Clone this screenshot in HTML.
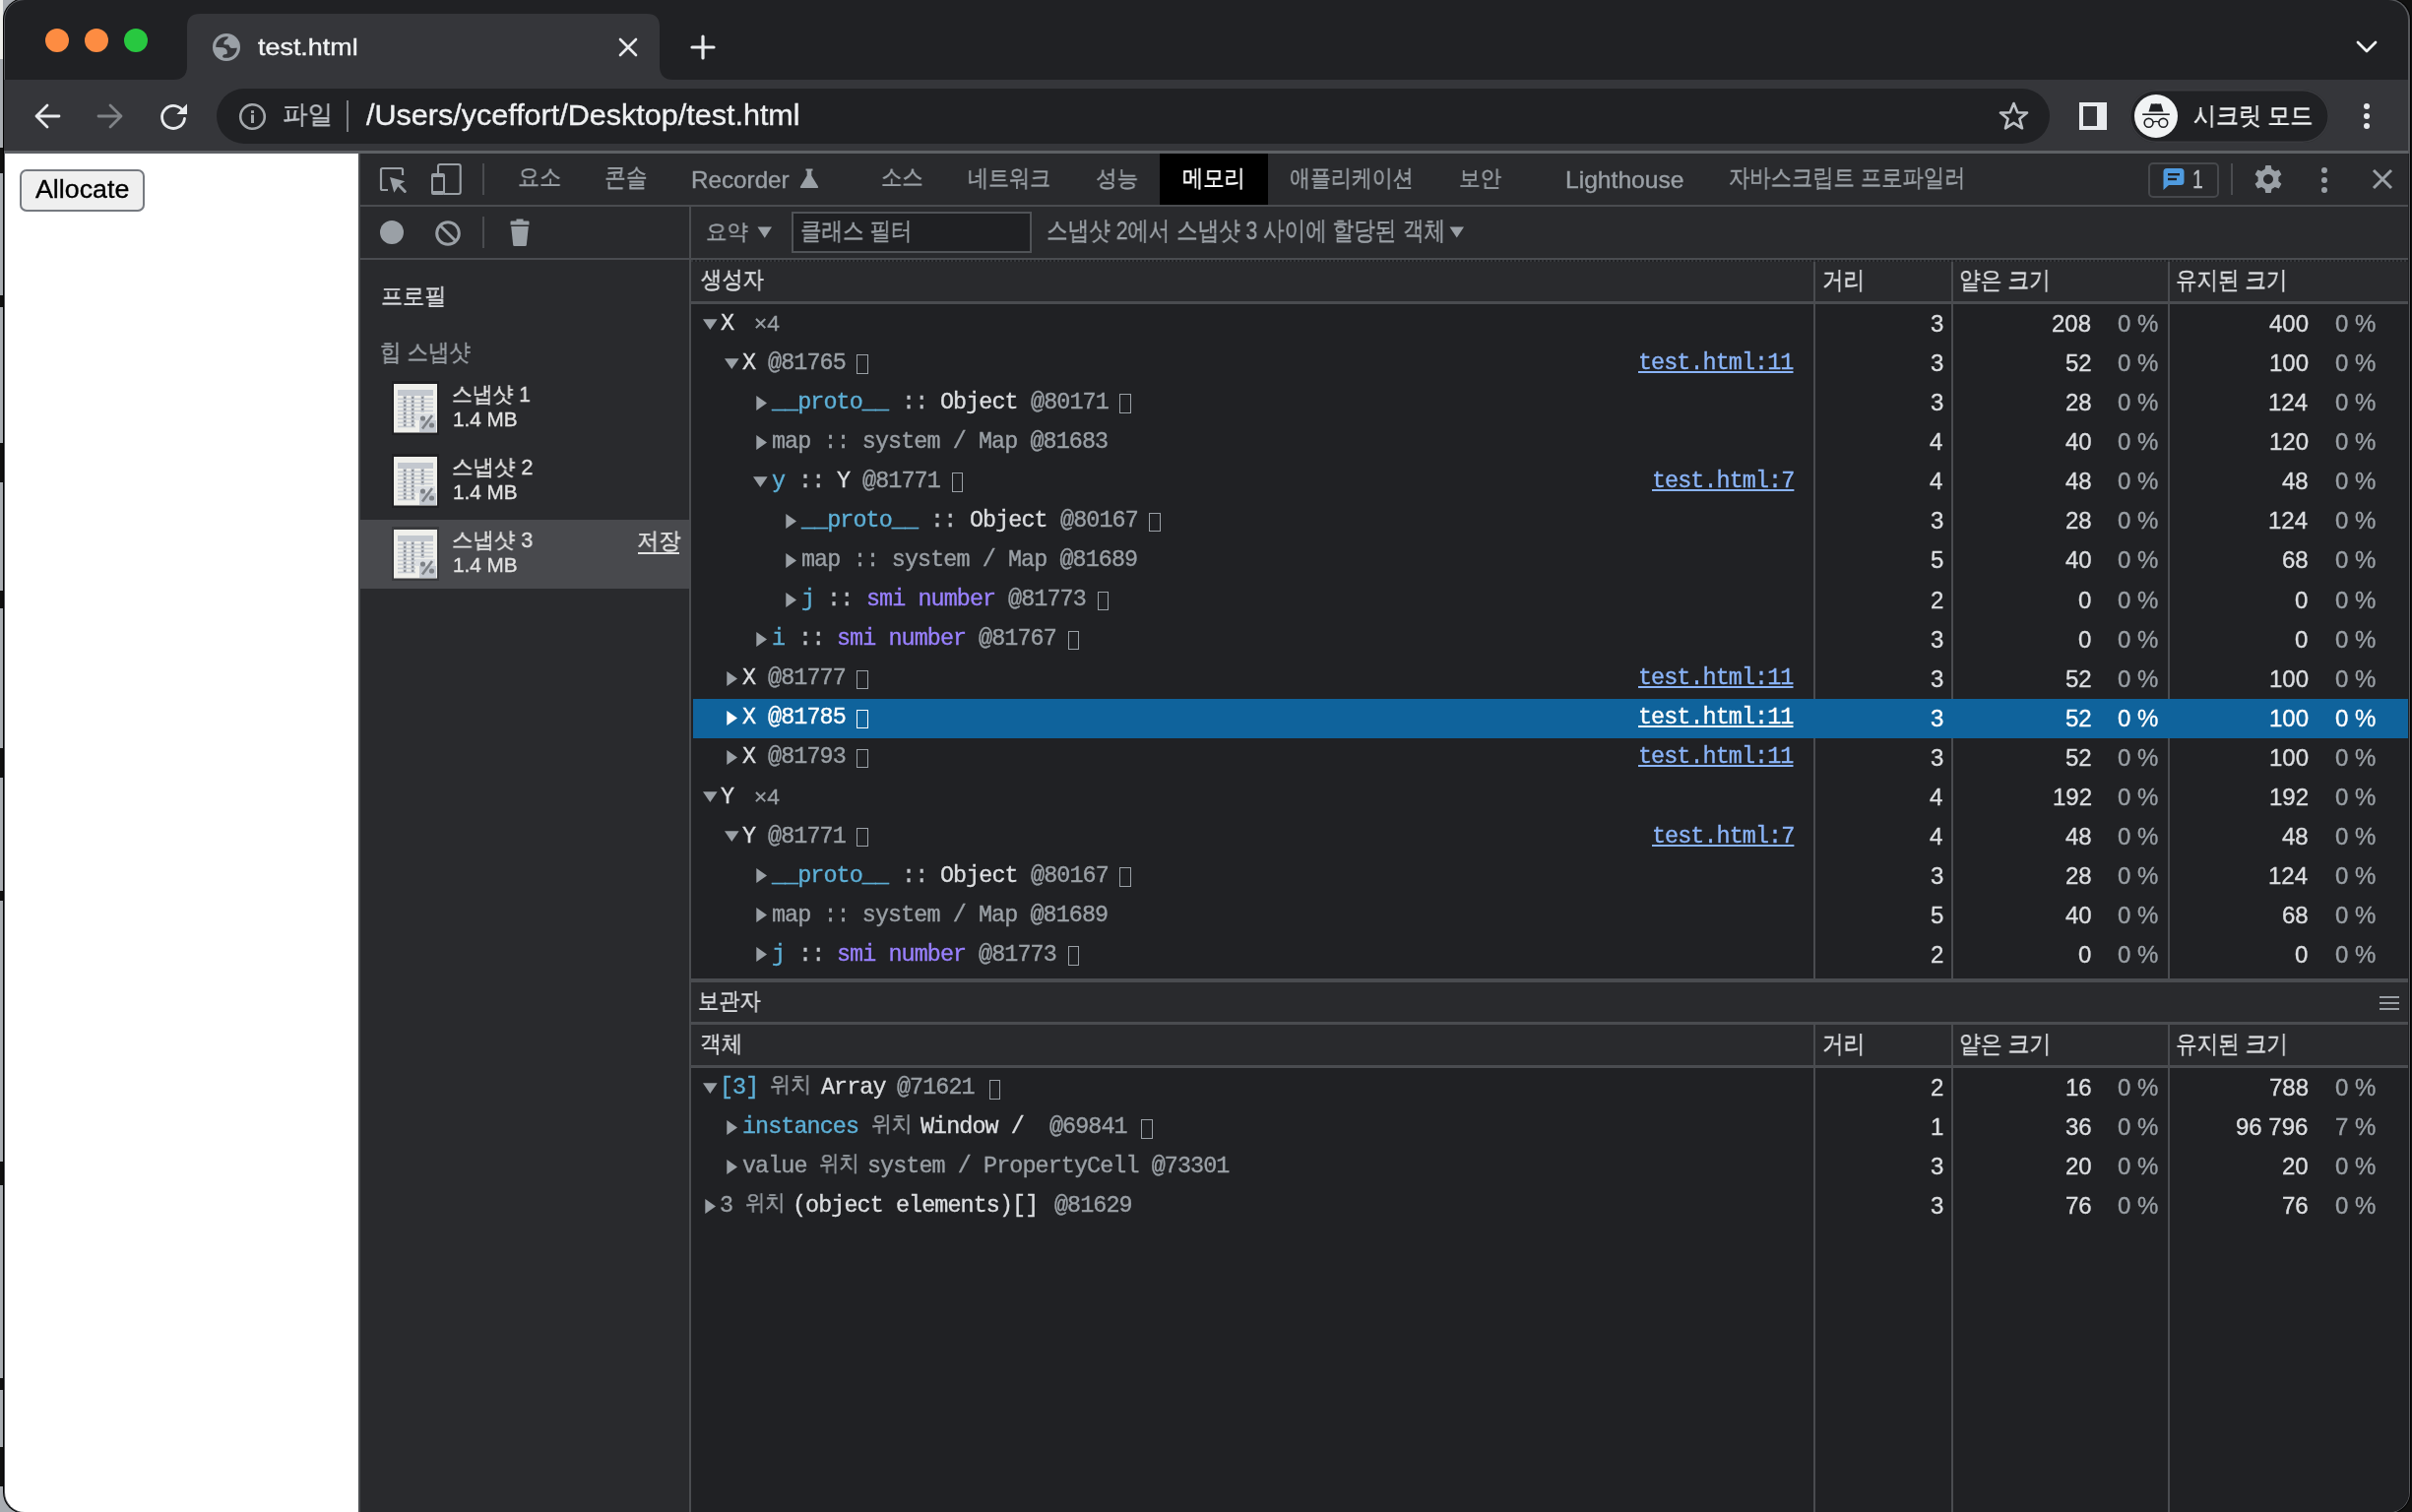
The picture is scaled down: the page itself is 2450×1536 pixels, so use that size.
<!DOCTYPE html>
<html><head><meta charset="utf-8"><style>
html,body{margin:0;padding:0;width:2450px;height:1536px;overflow:hidden;background:#a9adb2}
body>div,body>svg{position:absolute}
.t{position:absolute;white-space:pre;transform-origin:0 0;will-change:transform;-webkit-text-stroke:0.35px currentColor;font-family:"Liberation Sans",sans-serif}
</style></head><body>
<div style="left:0px;top:0px;width:2450px;height:1536px;background:#a9adb2;"></div>
<div style="left:0px;top:0px;width:3px;height:60px;background:#eeeeea;"></div>
<div style="left:0px;top:150px;width:3px;height:26px;background:#111;"></div>
<div style="left:0px;top:300px;width:3px;height:12px;background:#111;"></div>
<div style="left:0px;top:450px;width:3px;height:40px;background:#111;"></div>
<div style="left:0px;top:600px;width:3px;height:18px;background:#111;"></div>
<div style="left:0px;top:760px;width:3px;height:30px;background:#111;"></div>
<div style="left:0px;top:905px;width:3px;height:10px;background:#111;"></div>
<div style="left:0px;top:1180px;width:3px;height:24px;background:#111;"></div>
<div style="left:0px;top:1400px;width:3px;height:12px;background:#111;"></div>
<div style="left:0px;top:1470px;width:3px;height:40px;background:#111;"></div>
<div style="left:2447px;top:0px;width:3px;height:1536px;background:#111;"></div>
<div style="left:2380px;top:1470px;width:70px;height:66px;background:#111;"></div>
<div style="left:2400px;top:0px;width:50px;height:40px;background:#111;"></div>
<div style="left:2.5px;top:-2px;width:2446px;height:1540px;background:#000;border-radius:22px"></div>
<div style="left:3.5px;top:-1px;width:2444px;height:1538px;background:#55575b;border-radius:21px"></div>
<div style="left:5px;top:0px;width:2441px;height:81px;background:#202124;border-radius:20px 20px 0 0"></div>
<div style="left:46px;top:29px;width:24px;height:24px;background:#fd8c42;border-radius:50%"></div>
<div style="left:86px;top:29px;width:24px;height:24px;background:#fd8c42;border-radius:50%"></div>
<div style="left:126px;top:29px;width:24px;height:24px;background:#28c840;border-radius:50%"></div>
<svg style="position:absolute;left:176px;top:14px" width="508" height="67" viewBox="0 0 508 67"><path d="M0 67 Q14 67 14 53 L14 13 Q14 0 27 0 L481 0 Q494 0 494 13 L494 53 Q494 67 508 67 Z" fill="#35363a"/></svg>
<svg style="position:absolute;left:216px;top:34px" width="28" height="28" viewBox="0 0 28 28"><defs><clipPath id="gc"><circle cx="14" cy="14" r="12.5"/></clipPath></defs><circle cx="14" cy="14" r="12.4" fill="none" stroke="#9aa0a6" stroke-width="3.2"/><g clip-path="url(#gc)" fill="#9aa0a6"><path d="M16.5 0 L16 3.5 Q15.5 5.6 13.5 6.5 Q11.4 7.6 11.4 9.5 L11.4 11.3 L16 11.6 Q17 12.2 17.2 13.4 Q18.3 14.9 20 14.9 L28 14.5 L28 0 Z"/><path d="M0 13.8 L10.5 14.3 Q13.5 15 14.6 17.2 L14.9 20.3 Q14.6 21.3 11.2 21.4 Q10.2 21.8 10.2 23.5 L10 28 L0 28 Z"/></g></svg>
<div class="t" style="left:262.00px;top:35.98px;font-size:24.00px;line-height:24.00px;color:#f1f3f4;font-family:'Liberation Sans',sans-serif;transform:scaleX(1.1211);">test.html</div>
<svg style="position:absolute;left:628px;top:38px" width="20" height="20" viewBox="0 0 20 20"><path d="M2 2 L18 18 M18 2 L2 18" stroke="#e8eaed" stroke-width="2.6" stroke-linecap="round"/></svg>
<svg style="position:absolute;left:700px;top:34px" width="28" height="28" viewBox="0 0 28 28"><path d="M14 3 V25 M3 14 H25" stroke="#e8eaed" stroke-width="3.2" stroke-linecap="round"/></svg>
<svg style="position:absolute;left:2392px;top:40px" width="24" height="16" viewBox="0 0 24 16"><path d="M3 3 L12 12 L21 3" fill="none" stroke="#f1f3f4" stroke-width="2.8" stroke-linecap="round" stroke-linejoin="round"/></svg>
<div style="left:4px;top:81px;width:2442px;height:72px;background:#35363a;"></div>
<div style="left:4px;top:153px;width:2442px;height:3px;background:#5d6064;"></div>
<svg style="position:absolute;left:33px;top:103px" width="30" height="30" viewBox="0 0 30 30"><path d="M27 15 H4 M15 4 L4 15 L15 26" fill="none" stroke="#e8eaed" stroke-width="2.8" stroke-linecap="round" stroke-linejoin="round"/></svg>
<svg style="position:absolute;left:97px;top:103px" width="30" height="30" viewBox="0 0 30 30"><path d="M3 15 H26 M15 4 L26 15 L15 26" fill="none" stroke="#808387" stroke-width="2.8" stroke-linecap="round" stroke-linejoin="round"/></svg>
<svg style="position:absolute;left:161px;top:103px" width="31" height="31" viewBox="0 0 31 31"><path d="M25.5 11 A11.5 11.5 0 1 0 26.5 17.5" fill="none" stroke="#e8eaed" stroke-width="2.8" stroke-linecap="round"/><path d="M29 2.5 V13 H18.5 Z" fill="#e8eaed"/></svg>
<div style="left:220px;top:90px;width:1862px;height:56px;background:#202124;border-radius:28px"></div>
<svg style="position:absolute;left:242px;top:104px" width="29" height="29" viewBox="0 0 29 29"><circle cx="14.5" cy="14.5" r="12.3" fill="none" stroke="#a3a7ab" stroke-width="2.6"/><rect x="13" y="12.5" width="3" height="8.5" fill="#a3a7ab"/><rect x="13" y="8.2" width="3" height="2.8" fill="#a3a7ab"/></svg>
<div class="t" style="left:287.43px;top:104.40px;font-size:25.81px;line-height:25.81px;color:#bdc1c6;font-family:'Liberation Sans',sans-serif;transform:scaleX(0.9856);">파일</div>
<div style="left:352px;top:102px;width:2px;height:32px;background:#7b7e83;"></div>
<div class="t" style="left:372.00px;top:102.85px;font-size:29.00px;line-height:29.00px;color:#eef0f2;font-family:'Liberation Sans',sans-serif;transform:scaleX(1.0528);">/Users/yceffort/Desktop/test.html</div>
<svg style="position:absolute;left:2029px;top:102px" width="33" height="32" viewBox="0 0 33 32"><path d="M16.5 3 L20.3 12.2 L30 12.6 L22.4 18.7 L25 28.3 L16.5 22.8 L8 28.3 L10.6 18.7 L3 12.6 L12.7 12.2 Z" fill="none" stroke="#bdc1c6" stroke-width="2.6" stroke-linejoin="round"/></svg>
<div style="left:2112px;top:104px;width:28px;height:28px;background:#e8eaed;"></div>
<div style="left:2116px;top:108px;width:14px;height:20px;background:#35363a;"></div>
<div style="left:2163px;top:91px;width:203px;height:54px;background:#202124;border-radius:27px;box-shadow:inset 0 0 0 1.5px #3a3b3f"></div>
<div style="left:2168px;top:96px;width:44px;height:44px;background:#f1f3f4;border-radius:50%"></div>
<svg style="position:absolute;left:2168px;top:96px" width="44" height="44" viewBox="0 0 44 44"><path d="M14.5 17.4 L17 9.3 Q19.5 9.8 22 9.3 Q24.5 9.8 27 9.3 L29.5 17.4 Z" fill="#202124"/><rect x="8.2" y="19.4" width="27.6" height="1.6" fill="#202124"/><circle cx="14.6" cy="28.8" r="4.4" fill="none" stroke="#202124" stroke-width="1.6"/><circle cx="29.3" cy="28.8" r="4.4" fill="none" stroke="#202124" stroke-width="1.6"/><path d="M19 28 Q22 26.8 25 28" fill="none" stroke="#202124" stroke-width="1.4"/></svg>
<div class="t" style="left:2227.69px;top:105.18px;font-size:25.03px;line-height:25.03px;color:#f1f3f4;font-family:'Liberation Sans',sans-serif;transform:scaleX(0.9193);">시크릿 모드</div>
<div style="left:2400.7px;top:104.7px;width:6.6px;height:6.6px;background:#e8eaed;border-radius:50%"></div>
<div style="left:2400.7px;top:114.9px;width:6.6px;height:6.6px;background:#e8eaed;border-radius:50%"></div>
<div style="left:2400.7px;top:124.89999999999999px;width:6.6px;height:6.6px;background:#e8eaed;border-radius:50%"></div>
<div style="left:4.5px;top:156px;width:359.5px;height:1380px;background:#ffffff;border-radius:0 0 0 20px"></div>
<div style="left:20px;top:172px;width:127px;height:43px;background:#efefef;border-radius:7px;box-shadow:inset 0 0 0 2px #767a80"></div>
<div class="t" style="left:35.80px;top:179.18px;font-size:26.60px;line-height:26.60px;color:#000;font-family:'Liberation Sans',sans-serif;transform:scaleX(1.0071);">Allocate</div>
<div style="left:364px;top:156px;width:2082.5px;height:1380px;background:#202124;border-radius:0 0 20px 0"></div>
<div style="left:364px;top:156px;width:2px;height:1380px;background:#4a4c50;"></div>
<div style="left:366px;top:156px;width:2080px;height:52px;background:#292a2d;"></div>
<div style="left:366px;top:208px;width:2080px;height:2px;background:#4a4c50;"></div>
<svg style="position:absolute;left:384px;top:167px" width="32" height="32" viewBox="0 0 32 32"><path d="M10 26 H4.5 Q3 26 3 24.5 V5.5 Q3 4 4.5 4 H23.5 Q25 4 25 5.5 V11" fill="none" stroke="#9aa0a6" stroke-width="2.2"/><path d="M12 13 L27.3 17.2 L21.3 20.8 L16.3 28.7 Z" fill="#9aa0a6"/><path d="M20 20 L27.3 27.5" stroke="#9aa0a6" stroke-width="3" stroke-linecap="round"/></svg>
<svg style="position:absolute;left:436px;top:165px" width="34" height="35" viewBox="0 0 34 35"><path d="M9 11 V4 Q9 2 11 2 H29.7 Q31.7 2 31.7 4 V30 Q31.7 32 29.7 32 H15" fill="none" stroke="#9aa0a6" stroke-width="2.1"/><path fill="#9aa0a6" fill-rule="evenodd" d="M4 11 H14 Q16 11 16 13 V31 Q16 33 14 33 H4 Q2 33 2 31 V13 Q2 11 4 11 Z M4 15 V29 H14 V15 Z"/></svg>
<div style="left:490px;top:166px;width:2px;height:32px;background:#4a4c50;"></div>
<div class="t" style="left:526.38px;top:169.22px;font-size:23.62px;line-height:23.62px;color:#9aa0a6;font-family:'Liberation Sans',sans-serif;transform:scaleX(0.9194);">요소</div>
<div class="t" style="left:614.49px;top:168.08px;font-size:25.75px;line-height:25.75px;color:#9aa0a6;font-family:'Liberation Sans',sans-serif;transform:scaleX(0.8375);">콘솔</div>
<div class="t" style="left:894.50px;top:168.37px;font-size:24.17px;line-height:24.17px;color:#9aa0a6;font-family:'Liberation Sans',sans-serif;transform:scaleX(0.8877);">소스</div>
<div class="t" style="left:983.03px;top:168.87px;font-size:24.13px;line-height:24.13px;color:#9aa0a6;font-family:'Liberation Sans',sans-serif;transform:scaleX(0.8759);">네트워크</div>
<div class="t" style="left:1112.74px;top:170.20px;font-size:22.79px;line-height:22.79px;color:#9aa0a6;font-family:'Liberation Sans',sans-serif;transform:scaleX(0.9405);">성능</div>
<div class="t" style="left:1310.34px;top:168.87px;font-size:24.13px;line-height:24.13px;color:#9aa0a6;font-family:'Liberation Sans',sans-serif;transform:scaleX(0.8728);">애플리케이션</div>
<div class="t" style="left:1482.11px;top:170.20px;font-size:22.74px;line-height:22.74px;color:#9aa0a6;font-family:'Liberation Sans',sans-serif;transform:scaleX(0.9371);">보안</div>
<div class="t" style="left:1756.35px;top:168.81px;font-size:24.75px;line-height:24.75px;color:#9aa0a6;font-family:'Liberation Sans',sans-serif;transform:scaleX(0.8523);">자바스크립트 프로파일러</div>
<div class="t" style="left:702.16px;top:170.68px;font-size:24.00px;line-height:24.00px;color:#9aa0a6;font-family:'Liberation Sans',sans-serif;transform:scaleX(1.0096);">Recorder</div>
<div class="t" style="left:1589.83px;top:170.68px;font-size:24.00px;line-height:24.00px;color:#9aa0a6;font-family:'Liberation Sans',sans-serif;transform:scaleX(1.0260);">Lighthouse</div>
<svg style="position:absolute;left:812px;top:170px" width="20" height="22" viewBox="0 0 20 22"><path d="M6.5 1.5 H13.5 V3.5 H12.3 V8.5 L19 19.5 Q19.8 21 18 21 H2 Q0.2 21 1 19.5 L7.7 8.5 V3.5 H6.5 Z" fill="#9aa0a6"/></svg>
<div style="left:1178px;top:156px;width:110px;height:52px;background:#000;"></div>
<div class="t" style="left:1200.83px;top:168.87px;font-size:24.13px;line-height:24.13px;color:#ffffff;font-family:'Liberation Sans',sans-serif;transform:scaleX(0.8850);">메모리</div>
<div style="left:2182px;top:164.5px;width:71.5px;height:36px;background:transparent;box-sizing:border-box;border:2px solid #46484c;border-radius:5px"></div>
<svg style="position:absolute;left:2196px;top:170px" width="24" height="24" viewBox="0 0 24 24"><path d="M3.5 1 H19 Q22.5 1 22.5 4.5 V14.5 Q22.5 18 19 18 H7 L1.5 23 V4.5 Q1.5 1 5 1 Z" fill="#4f9be0"/><rect x="6" y="6" width="12" height="2.4" fill="#202124"/><rect x="6" y="10.8" width="9" height="2.4" fill="#202124"/></svg>
<div class="t" style="left:2226.57px;top:169.65px;font-size:25.22px;line-height:25.22px;color:#bdc1c6;font-family:'Liberation Sans',sans-serif;transform:scaleX(0.7566);">1</div>
<div style="left:2266px;top:166px;width:2px;height:32px;background:#4a4c50;"></div>
<svg style="position:absolute;left:2289px;top:167px" width="30" height="30" viewBox="0 0 30 30"><path fill="#9aa0a6" fill-rule="evenodd" d="M12.3 1 H17.7 L18.5 5.1 Q20.3 5.8 21.8 7 L25.7 5.6 L28.4 10.3 L25.3 13 Q25.6 15 25.3 17 L28.4 19.7 L25.7 24.4 L21.8 23 Q20.3 24.2 18.5 24.9 L17.7 29 H12.3 L11.5 24.9 Q9.7 24.2 8.2 23 L4.3 24.4 L1.6 19.7 L4.7 17 Q4.4 15 4.7 13 L1.6 10.3 L4.3 5.6 L8.2 7 Q9.7 5.8 11.5 5.1 Z M15 10 A5 5 0 1 0 15.01 10 Z"/></svg>
<div style="left:2358px;top:170px;width:6px;height:6px;background:#9aa0a6;border-radius:50%"></div>
<div style="left:2358px;top:180px;width:6px;height:6px;background:#9aa0a6;border-radius:50%"></div>
<div style="left:2358px;top:190px;width:6px;height:6px;background:#9aa0a6;border-radius:50%"></div>
<svg style="position:absolute;left:2407px;top:169px" width="26" height="26" viewBox="0 0 26 26"><path d="M4 4 L22 22 M22 4 L4 22" stroke="#9aa0a6" stroke-width="3"/></svg>
<div style="left:366px;top:210px;width:2080px;height:52px;background:#292a2d;"></div>
<div style="left:366px;top:262px;width:2080px;height:2px;background:#4a4c50;"></div>
<div style="left:386px;top:223.7px;width:24px;height:24px;background:#9aa0a6;border-radius:50%"></div>
<svg style="position:absolute;left:441px;top:223px" width="28" height="28" viewBox="0 0 28 28"><circle cx="14" cy="14" r="11.3" fill="none" stroke="#9aa0a6" stroke-width="3"/><path d="M6 6 L22 22" stroke="#9aa0a6" stroke-width="3"/></svg>
<div style="left:490px;top:220px;width:2px;height:32px;background:#4a4c50;"></div>
<svg style="position:absolute;left:517px;top:221px" width="22" height="30" viewBox="0 0 22 30"><path d="M7.5 1.5 H14.5 V3.5 H19.5 Q20.5 3.5 20.5 4.5 V7.5 H1.5 V4.5 Q1.5 3.5 2.5 3.5 H7.5 Z" fill="#9aa0a6"/><path d="M2.2 9 H19.8 L17.8 28 Q17.6 29 16.6 29 H5.4 Q4.4 29 4.2 28 Z" fill="#9aa0a6"/></svg>
<div class="t" style="left:717.12px;top:224.60px;font-size:21.77px;line-height:21.77px;color:#9aa0a6;font-family:'Liberation Sans',sans-serif;transform:scaleX(0.9742);">요약</div>
<svg style="position:absolute;left:769px;top:229.5px" width="16" height="12" viewBox="0 0 16 12"><path d="M0.5 0.5 H15 L7.75 11.8 Z" fill="#9aa0a6"/></svg>
<div style="left:804px;top:215px;width:244px;height:42px;background:#1f2023;box-sizing:border-box;border:2px solid #505357"></div>
<div class="t" style="left:812.99px;top:222.28px;font-size:25.03px;line-height:25.03px;color:#9aa0a6;font-family:'Liberation Sans',sans-serif;transform:scaleX(0.8595);">클래스 필터</div>
<div class="t" style="left:1063.20px;top:222.21px;font-size:25.75px;line-height:25.75px;color:#9aa0a6;font-family:'Liberation Sans',sans-serif;transform:scaleX(0.8302);">스냅샷 2에서 스냅샷 3 사이에 할당된 객체</div>
<svg style="position:absolute;left:1472px;top:230px" width="16" height="12" viewBox="0 0 16 12"><path d="M0.5 0.5 H15 L7.75 11.5 Z" fill="#9aa0a6"/></svg>
<div style="left:366px;top:264px;width:334px;height:1272px;background:#292a2d;"></div>
<div style="left:700px;top:210px;width:2px;height:1326px;background:#4a4c50;"></div>
<div class="t" style="left:386.68px;top:289.71px;font-size:23.66px;line-height:23.66px;color:#dadce0;font-family:'Liberation Sans',sans-serif;transform:scaleX(0.9209);">프로필</div>
<div class="t" style="left:385.62px;top:346.20px;font-size:23.76px;line-height:23.76px;color:#9aa0a6;font-family:'Liberation Sans',sans-serif;transform:scaleX(0.8905);">힙 스냅샷</div>
<div style="left:366px;top:528px;width:334px;height:70px;background:#48494d;"></div>
<svg style="position:absolute;left:398px;top:387px" width="48" height="55" viewBox="0 0 48 55"><rect x="0" y="0" width="48" height="55" fill="rgba(0,0,0,0.22)"/><rect x="2" y="3" width="44" height="49.5" fill="#efefeb"/><rect x="6" y="9" width="36" height="6" fill="#c3c8cf"/><rect x="6" y="17.5" width="36" height="1.8" fill="#c8ccd2"/><rect x="6" y="21.5" width="36" height="1.8" fill="#c8ccd2"/><rect x="6" y="25.5" width="36" height="1.8" fill="#c8ccd2"/><rect x="6" y="29.5" width="36" height="1.8" fill="#c8ccd2"/><rect x="6" y="33.5" width="18" height="1.8" fill="#c8ccd2"/><rect x="6" y="37.5" width="18" height="1.8" fill="#c8ccd2"/><rect x="6" y="41.5" width="18" height="1.8" fill="#c8ccd2"/><rect x="6" y="45.5" width="18" height="1.8" fill="#c8ccd2"/><rect x="11.5" y="13" width="3.5" height="34" fill="#c3c8cf"/><rect x="19.5" y="13" width="3.5" height="34" fill="#c3c8cf"/><rect x="29.5" y="13" width="3.5" height="19" fill="#c3c8cf"/><rect x="12.2" y="16" width="2" height="2" fill="#8c9096"/><rect x="12.2" y="20" width="2" height="2" fill="#8c9096"/><rect x="12.2" y="24" width="2" height="2" fill="#8c9096"/><rect x="12.2" y="28" width="2" height="2" fill="#8c9096"/><rect x="12.2" y="32" width="2" height="2" fill="#8c9096"/><rect x="12.2" y="36" width="2" height="2" fill="#8c9096"/><rect x="12.2" y="40" width="2" height="2" fill="#8c9096"/><rect x="12.2" y="44" width="2" height="2" fill="#8c9096"/><rect x="20.2" y="16" width="2" height="2" fill="#8c9096"/><rect x="20.2" y="20" width="2" height="2" fill="#8c9096"/><rect x="20.2" y="24" width="2" height="2" fill="#8c9096"/><rect x="20.2" y="28" width="2" height="2" fill="#8c9096"/><rect x="20.2" y="32" width="2" height="2" fill="#8c9096"/><rect x="20.2" y="36" width="2" height="2" fill="#8c9096"/><rect x="20.2" y="40" width="2" height="2" fill="#8c9096"/><rect x="20.2" y="44" width="2" height="2" fill="#8c9096"/><rect x="30.2" y="16" width="2" height="2" fill="#8c9096"/><rect x="30.2" y="20" width="2" height="2" fill="#8c9096"/><rect x="30.2" y="24" width="2" height="2" fill="#8c9096"/><rect x="30.2" y="28" width="2" height="2" fill="#8c9096"/><rect x="28" y="40" width="17" height="12" fill="#c3c8cf"/><rect x="24" y="33" width="20" height="7" fill="#dadde1"/><circle cx="31.5" cy="38" r="2.6" fill="#7d8186"/><circle cx="40.5" cy="45" r="2.6" fill="#7d8186"/><path d="M41 35 L31 48.5" stroke="#7d8186" stroke-width="2.6"/></svg>
<div class="t" style="left:459.03px;top:390.35px;font-size:22.21px;line-height:22.21px;color:#e3e3e3;font-family:'Liberation Sans',sans-serif;transform:scaleX(0.9434);">스냅샷 1</div>
<div class="t" style="left:459.55px;top:415.77px;font-size:20.00px;line-height:20.00px;color:#e3e3e3;font-family:'Liberation Sans',sans-serif;transform:scaleX(1.0342);">1.4 MB</div>
<svg style="position:absolute;left:398px;top:461px" width="48" height="55" viewBox="0 0 48 55"><rect x="0" y="0" width="48" height="55" fill="rgba(0,0,0,0.22)"/><rect x="2" y="3" width="44" height="49.5" fill="#efefeb"/><rect x="6" y="9" width="36" height="6" fill="#c3c8cf"/><rect x="6" y="17.5" width="36" height="1.8" fill="#c8ccd2"/><rect x="6" y="21.5" width="36" height="1.8" fill="#c8ccd2"/><rect x="6" y="25.5" width="36" height="1.8" fill="#c8ccd2"/><rect x="6" y="29.5" width="36" height="1.8" fill="#c8ccd2"/><rect x="6" y="33.5" width="18" height="1.8" fill="#c8ccd2"/><rect x="6" y="37.5" width="18" height="1.8" fill="#c8ccd2"/><rect x="6" y="41.5" width="18" height="1.8" fill="#c8ccd2"/><rect x="6" y="45.5" width="18" height="1.8" fill="#c8ccd2"/><rect x="11.5" y="13" width="3.5" height="34" fill="#c3c8cf"/><rect x="19.5" y="13" width="3.5" height="34" fill="#c3c8cf"/><rect x="29.5" y="13" width="3.5" height="19" fill="#c3c8cf"/><rect x="12.2" y="16" width="2" height="2" fill="#8c9096"/><rect x="12.2" y="20" width="2" height="2" fill="#8c9096"/><rect x="12.2" y="24" width="2" height="2" fill="#8c9096"/><rect x="12.2" y="28" width="2" height="2" fill="#8c9096"/><rect x="12.2" y="32" width="2" height="2" fill="#8c9096"/><rect x="12.2" y="36" width="2" height="2" fill="#8c9096"/><rect x="12.2" y="40" width="2" height="2" fill="#8c9096"/><rect x="12.2" y="44" width="2" height="2" fill="#8c9096"/><rect x="20.2" y="16" width="2" height="2" fill="#8c9096"/><rect x="20.2" y="20" width="2" height="2" fill="#8c9096"/><rect x="20.2" y="24" width="2" height="2" fill="#8c9096"/><rect x="20.2" y="28" width="2" height="2" fill="#8c9096"/><rect x="20.2" y="32" width="2" height="2" fill="#8c9096"/><rect x="20.2" y="36" width="2" height="2" fill="#8c9096"/><rect x="20.2" y="40" width="2" height="2" fill="#8c9096"/><rect x="20.2" y="44" width="2" height="2" fill="#8c9096"/><rect x="30.2" y="16" width="2" height="2" fill="#8c9096"/><rect x="30.2" y="20" width="2" height="2" fill="#8c9096"/><rect x="30.2" y="24" width="2" height="2" fill="#8c9096"/><rect x="30.2" y="28" width="2" height="2" fill="#8c9096"/><rect x="28" y="40" width="17" height="12" fill="#c3c8cf"/><rect x="24" y="33" width="20" height="7" fill="#dadde1"/><circle cx="31.5" cy="38" r="2.6" fill="#7d8186"/><circle cx="40.5" cy="45" r="2.6" fill="#7d8186"/><path d="M41 35 L31 48.5" stroke="#7d8186" stroke-width="2.6"/></svg>
<div class="t" style="left:458.99px;top:464.35px;font-size:22.21px;line-height:22.21px;color:#e3e3e3;font-family:'Liberation Sans',sans-serif;transform:scaleX(0.9737);">스냅샷 2</div>
<div class="t" style="left:459.55px;top:489.77px;font-size:20.00px;line-height:20.00px;color:#e3e3e3;font-family:'Liberation Sans',sans-serif;transform:scaleX(1.0342);">1.4 MB</div>
<svg style="position:absolute;left:398px;top:535px" width="48" height="55" viewBox="0 0 48 55"><rect x="0" y="0" width="48" height="55" fill="rgba(0,0,0,0.22)"/><rect x="2" y="3" width="44" height="49.5" fill="#efefeb"/><rect x="6" y="9" width="36" height="6" fill="#c3c8cf"/><rect x="6" y="17.5" width="36" height="1.8" fill="#c8ccd2"/><rect x="6" y="21.5" width="36" height="1.8" fill="#c8ccd2"/><rect x="6" y="25.5" width="36" height="1.8" fill="#c8ccd2"/><rect x="6" y="29.5" width="36" height="1.8" fill="#c8ccd2"/><rect x="6" y="33.5" width="18" height="1.8" fill="#c8ccd2"/><rect x="6" y="37.5" width="18" height="1.8" fill="#c8ccd2"/><rect x="6" y="41.5" width="18" height="1.8" fill="#c8ccd2"/><rect x="6" y="45.5" width="18" height="1.8" fill="#c8ccd2"/><rect x="11.5" y="13" width="3.5" height="34" fill="#c3c8cf"/><rect x="19.5" y="13" width="3.5" height="34" fill="#c3c8cf"/><rect x="29.5" y="13" width="3.5" height="19" fill="#c3c8cf"/><rect x="12.2" y="16" width="2" height="2" fill="#8c9096"/><rect x="12.2" y="20" width="2" height="2" fill="#8c9096"/><rect x="12.2" y="24" width="2" height="2" fill="#8c9096"/><rect x="12.2" y="28" width="2" height="2" fill="#8c9096"/><rect x="12.2" y="32" width="2" height="2" fill="#8c9096"/><rect x="12.2" y="36" width="2" height="2" fill="#8c9096"/><rect x="12.2" y="40" width="2" height="2" fill="#8c9096"/><rect x="12.2" y="44" width="2" height="2" fill="#8c9096"/><rect x="20.2" y="16" width="2" height="2" fill="#8c9096"/><rect x="20.2" y="20" width="2" height="2" fill="#8c9096"/><rect x="20.2" y="24" width="2" height="2" fill="#8c9096"/><rect x="20.2" y="28" width="2" height="2" fill="#8c9096"/><rect x="20.2" y="32" width="2" height="2" fill="#8c9096"/><rect x="20.2" y="36" width="2" height="2" fill="#8c9096"/><rect x="20.2" y="40" width="2" height="2" fill="#8c9096"/><rect x="20.2" y="44" width="2" height="2" fill="#8c9096"/><rect x="30.2" y="16" width="2" height="2" fill="#8c9096"/><rect x="30.2" y="20" width="2" height="2" fill="#8c9096"/><rect x="30.2" y="24" width="2" height="2" fill="#8c9096"/><rect x="30.2" y="28" width="2" height="2" fill="#8c9096"/><rect x="28" y="40" width="17" height="12" fill="#c3c8cf"/><rect x="24" y="33" width="20" height="7" fill="#dadde1"/><circle cx="31.5" cy="38" r="2.6" fill="#7d8186"/><circle cx="40.5" cy="45" r="2.6" fill="#7d8186"/><path d="M41 35 L31 48.5" stroke="#7d8186" stroke-width="2.6"/></svg>
<div class="t" style="left:458.99px;top:538.35px;font-size:22.21px;line-height:22.21px;color:#e3e3e3;font-family:'Liberation Sans',sans-serif;transform:scaleX(0.9724);">스냅샷 3</div>
<div class="t" style="left:459.55px;top:563.77px;font-size:20.00px;line-height:20.00px;color:#e3e3e3;font-family:'Liberation Sans',sans-serif;transform:scaleX(1.0342);">1.4 MB</div>
<div class="t" style="left:646.69px;top:538.82px;font-size:22.57px;line-height:22.57px;color:#e3e3e3;font-family:'Liberation Sans',sans-serif;transform:scaleX(0.9671);">저장</div>
<div style="left:648px;top:560.5px;width:42px;height:2px;background:#e3e3e3;"></div>
<div style="left:702px;top:264px;width:1744.5px;height:1272px;background:#202124;border-radius:0 0 20px 0"></div>
<div style="left:702px;top:266px;width:1744px;height:41px;background:#292a2d;"></div>
<div style="left:702px;top:264px;width:1744px;height:1.5px;background:transparent;background:repeating-linear-gradient(90deg,#35373b 0 2px,transparent 2px 4px)"></div>
<div style="left:702px;top:306px;width:1744px;height:2.5px;background:#4a4c50;"></div>
<div style="left:1842px;top:266px;width:2px;height:728px;background:#4a4c50;"></div>
<div style="left:1982px;top:266px;width:2px;height:728px;background:#4a4c50;"></div>
<div style="left:2202px;top:266px;width:2px;height:728px;background:#4a4c50;"></div>
<div class="t" style="left:711.88px;top:273.12px;font-size:23.58px;line-height:23.58px;color:#dcdee1;font-family:'Liberation Sans',sans-serif;transform:scaleX(0.8885);">생성자</div>
<div class="t" style="left:1851.29px;top:272.17px;font-size:25.14px;line-height:25.14px;color:#dcdee1;font-family:'Liberation Sans',sans-serif;transform:scaleX(0.8604);">거리</div>
<div class="t" style="left:1990.45px;top:272.17px;font-size:25.14px;line-height:25.14px;color:#dcdee1;font-family:'Liberation Sans',sans-serif;transform:scaleX(0.8668);">얕은 크기</div>
<div class="t" style="left:2210.49px;top:272.17px;font-size:25.14px;line-height:25.14px;color:#dcdee1;font-family:'Liberation Sans',sans-serif;transform:scaleX(0.8588);">유지된 크기</div>
<svg style="position:absolute;left:713.9px;top:323.5px" width="15" height="11" viewBox="0 0 15 11"><path d="M0 0.3 H14.6 L7.3 11 Z" fill="#9aa0a6"/></svg>
<div class="t" style="left:732.00px;top:317.78px;font-size:23.40px;line-height:23.40px;color:#dcdee1;font-family:'Liberation Mono',monospace;letter-spacing:-0.912px;">X</div>
<div class="t" style="left:766.43px;top:318.27px;font-size:22.00px;line-height:22.00px;color:#9aa0a6;font-family:'Liberation Sans',sans-serif;transform:scaleX(1.0313);">×4</div>
<div class="t" style="left:1960.84px;top:317.08px;font-size:24.00px;line-height:24.00px;color:#dcdee1;font-family:'Liberation Sans',sans-serif;">3</div>
<div class="t" style="left:2084.44px;top:317.08px;font-size:24.00px;line-height:24.00px;color:#dcdee1;font-family:'Liberation Sans',sans-serif;">208</div>
<div class="t" style="left:2151.46px;top:317.08px;font-size:24.00px;line-height:24.00px;color:#9aa0a6;font-family:'Liberation Sans',sans-serif;">0 %</div>
<div class="t" style="left:2304.62px;top:317.08px;font-size:24.00px;line-height:24.00px;color:#dcdee1;font-family:'Liberation Sans',sans-serif;">400</div>
<div class="t" style="left:2371.66px;top:317.08px;font-size:24.00px;line-height:24.00px;color:#9aa0a6;font-family:'Liberation Sans',sans-serif;">0 %</div>
<svg style="position:absolute;left:735.7px;top:363.56px" width="15" height="11" viewBox="0 0 15 11"><path d="M0 0.3 H14.6 L7.3 11 Z" fill="#9aa0a6"/></svg>
<div class="t" style="left:753.60px;top:357.84px;font-size:23.40px;line-height:23.40px;color:#dcdee1;font-family:'Liberation Mono',monospace;letter-spacing:-0.912px;">X</div>
<div class="t" style="left:766.73px;top:357.84px;font-size:23.40px;line-height:23.40px;color:#9aa0a6;font-family:'Liberation Mono',monospace;letter-spacing:-0.912px;"> @81765</div>
<div style="left:870.27px;top:360.26px;width:11.5px;height:19.5px;background:transparent;box-sizing:border-box;border:1.6px solid #9aa0a6"></div>
<div class="t" style="left:1664.38px;top:357.84px;font-size:23.40px;line-height:23.40px;color:#8ab4f8;font-family:'Liberation Mono',monospace;letter-spacing:-0.912px;text-decoration:underline;text-decoration-thickness:2px;text-underline-offset:2px">test.html:11</div>
<div class="t" style="left:1960.84px;top:357.14px;font-size:24.00px;line-height:24.00px;color:#dcdee1;font-family:'Liberation Sans',sans-serif;">3</div>
<div class="t" style="left:2097.91px;top:357.14px;font-size:24.00px;line-height:24.00px;color:#dcdee1;font-family:'Liberation Sans',sans-serif;">52</div>
<div class="t" style="left:2151.46px;top:357.14px;font-size:24.00px;line-height:24.00px;color:#9aa0a6;font-family:'Liberation Sans',sans-serif;">0 %</div>
<div class="t" style="left:2304.62px;top:357.14px;font-size:24.00px;line-height:24.00px;color:#dcdee1;font-family:'Liberation Sans',sans-serif;">100</div>
<div class="t" style="left:2371.66px;top:357.14px;font-size:24.00px;line-height:24.00px;color:#9aa0a6;font-family:'Liberation Sans',sans-serif;">0 %</div>
<svg style="position:absolute;left:768.0px;top:401.62px" width="11" height="15" viewBox="0 0 11 15"><path d="M0.3 0 L11 7.5 L0.3 15 Z" fill="#9aa0a6"/></svg>
<div class="t" style="left:784.40px;top:397.90px;font-size:23.40px;line-height:23.40px;color:#5db0d7;font-family:'Liberation Mono',monospace;letter-spacing:-0.912px;">__proto__</div>
<div class="t" style="left:902.57px;top:397.90px;font-size:23.40px;line-height:23.40px;color:#bdc1c6;font-family:'Liberation Mono',monospace;letter-spacing:-0.912px;"> :: </div>
<div class="t" style="left:955.09px;top:397.90px;font-size:23.40px;line-height:23.40px;color:#dcdee1;font-family:'Liberation Mono',monospace;letter-spacing:-0.912px;">Object</div>
<div class="t" style="left:1033.87px;top:397.90px;font-size:23.40px;line-height:23.40px;color:#9aa0a6;font-family:'Liberation Mono',monospace;letter-spacing:-0.912px;"> @80171</div>
<div style="left:1137.41px;top:400.32px;width:11.5px;height:19.5px;background:transparent;box-sizing:border-box;border:1.6px solid #9aa0a6"></div>
<div class="t" style="left:1960.84px;top:397.20px;font-size:24.00px;line-height:24.00px;color:#dcdee1;font-family:'Liberation Sans',sans-serif;">3</div>
<div class="t" style="left:2097.79px;top:397.20px;font-size:24.00px;line-height:24.00px;color:#dcdee1;font-family:'Liberation Sans',sans-serif;">28</div>
<div class="t" style="left:2151.46px;top:397.20px;font-size:24.00px;line-height:24.00px;color:#9aa0a6;font-family:'Liberation Sans',sans-serif;">0 %</div>
<div class="t" style="left:2304.38px;top:397.20px;font-size:24.00px;line-height:24.00px;color:#dcdee1;font-family:'Liberation Sans',sans-serif;">124</div>
<div class="t" style="left:2371.66px;top:397.20px;font-size:24.00px;line-height:24.00px;color:#9aa0a6;font-family:'Liberation Sans',sans-serif;">0 %</div>
<svg style="position:absolute;left:768.0px;top:441.68px" width="11" height="15" viewBox="0 0 11 15"><path d="M0.3 0 L11 7.5 L0.3 15 Z" fill="#9aa0a6"/></svg>
<div class="t" style="left:784.40px;top:437.96px;font-size:23.40px;line-height:23.40px;color:#9aa0a6;font-family:'Liberation Mono',monospace;letter-spacing:-0.912px;">map :: system / Map @81683</div>
<div class="t" style="left:1960.48px;top:437.26px;font-size:24.00px;line-height:24.00px;color:#dcdee1;font-family:'Liberation Sans',sans-serif;">4</div>
<div class="t" style="left:2097.67px;top:437.26px;font-size:24.00px;line-height:24.00px;color:#dcdee1;font-family:'Liberation Sans',sans-serif;">40</div>
<div class="t" style="left:2151.46px;top:437.26px;font-size:24.00px;line-height:24.00px;color:#9aa0a6;font-family:'Liberation Sans',sans-serif;">0 %</div>
<div class="t" style="left:2304.62px;top:437.26px;font-size:24.00px;line-height:24.00px;color:#dcdee1;font-family:'Liberation Sans',sans-serif;">120</div>
<div class="t" style="left:2371.66px;top:437.26px;font-size:24.00px;line-height:24.00px;color:#9aa0a6;font-family:'Liberation Sans',sans-serif;">0 %</div>
<svg style="position:absolute;left:765.3px;top:483.74px" width="15" height="11" viewBox="0 0 15 11"><path d="M0 0.3 H14.6 L7.3 11 Z" fill="#9aa0a6"/></svg>
<div class="t" style="left:784.40px;top:478.02px;font-size:23.40px;line-height:23.40px;color:#5db0d7;font-family:'Liberation Mono',monospace;letter-spacing:-0.912px;">y</div>
<div class="t" style="left:797.53px;top:478.02px;font-size:23.40px;line-height:23.40px;color:#bdc1c6;font-family:'Liberation Mono',monospace;letter-spacing:-0.912px;"> :: </div>
<div class="t" style="left:850.05px;top:478.02px;font-size:23.40px;line-height:23.40px;color:#dcdee1;font-family:'Liberation Mono',monospace;letter-spacing:-0.912px;">Y</div>
<div class="t" style="left:863.18px;top:478.02px;font-size:23.40px;line-height:23.40px;color:#9aa0a6;font-family:'Liberation Mono',monospace;letter-spacing:-0.912px;"> @81771</div>
<div style="left:966.72px;top:480.44px;width:11.5px;height:19.5px;background:transparent;box-sizing:border-box;border:1.6px solid #9aa0a6"></div>
<div class="t" style="left:1678.21px;top:478.02px;font-size:23.40px;line-height:23.40px;color:#8ab4f8;font-family:'Liberation Mono',monospace;letter-spacing:-0.912px;text-decoration:underline;text-decoration-thickness:2px;text-underline-offset:2px">test.html:7</div>
<div class="t" style="left:1960.48px;top:477.32px;font-size:24.00px;line-height:24.00px;color:#dcdee1;font-family:'Liberation Sans',sans-serif;">4</div>
<div class="t" style="left:2097.79px;top:477.32px;font-size:24.00px;line-height:24.00px;color:#dcdee1;font-family:'Liberation Sans',sans-serif;">48</div>
<div class="t" style="left:2151.46px;top:477.32px;font-size:24.00px;line-height:24.00px;color:#9aa0a6;font-family:'Liberation Sans',sans-serif;">0 %</div>
<div class="t" style="left:2318.09px;top:477.32px;font-size:24.00px;line-height:24.00px;color:#dcdee1;font-family:'Liberation Sans',sans-serif;">48</div>
<div class="t" style="left:2371.66px;top:477.32px;font-size:24.00px;line-height:24.00px;color:#9aa0a6;font-family:'Liberation Sans',sans-serif;">0 %</div>
<svg style="position:absolute;left:797.6px;top:521.8px" width="11" height="15" viewBox="0 0 11 15"><path d="M0.3 0 L11 7.5 L0.3 15 Z" fill="#9aa0a6"/></svg>
<div class="t" style="left:814.20px;top:518.08px;font-size:23.40px;line-height:23.40px;color:#5db0d7;font-family:'Liberation Mono',monospace;letter-spacing:-0.912px;">__proto__</div>
<div class="t" style="left:932.37px;top:518.08px;font-size:23.40px;line-height:23.40px;color:#bdc1c6;font-family:'Liberation Mono',monospace;letter-spacing:-0.912px;"> :: </div>
<div class="t" style="left:984.89px;top:518.08px;font-size:23.40px;line-height:23.40px;color:#dcdee1;font-family:'Liberation Mono',monospace;letter-spacing:-0.912px;">Object</div>
<div class="t" style="left:1063.67px;top:518.08px;font-size:23.40px;line-height:23.40px;color:#9aa0a6;font-family:'Liberation Mono',monospace;letter-spacing:-0.912px;"> @80167</div>
<div style="left:1167.21px;top:520.5px;width:11.5px;height:19.5px;background:transparent;box-sizing:border-box;border:1.6px solid #9aa0a6"></div>
<div class="t" style="left:1960.84px;top:517.38px;font-size:24.00px;line-height:24.00px;color:#dcdee1;font-family:'Liberation Sans',sans-serif;">3</div>
<div class="t" style="left:2097.79px;top:517.38px;font-size:24.00px;line-height:24.00px;color:#dcdee1;font-family:'Liberation Sans',sans-serif;">28</div>
<div class="t" style="left:2151.46px;top:517.38px;font-size:24.00px;line-height:24.00px;color:#9aa0a6;font-family:'Liberation Sans',sans-serif;">0 %</div>
<div class="t" style="left:2304.38px;top:517.38px;font-size:24.00px;line-height:24.00px;color:#dcdee1;font-family:'Liberation Sans',sans-serif;">124</div>
<div class="t" style="left:2371.66px;top:517.38px;font-size:24.00px;line-height:24.00px;color:#9aa0a6;font-family:'Liberation Sans',sans-serif;">0 %</div>
<svg style="position:absolute;left:797.6px;top:561.86px" width="11" height="15" viewBox="0 0 11 15"><path d="M0.3 0 L11 7.5 L0.3 15 Z" fill="#9aa0a6"/></svg>
<div class="t" style="left:814.20px;top:558.14px;font-size:23.40px;line-height:23.40px;color:#9aa0a6;font-family:'Liberation Mono',monospace;letter-spacing:-0.912px;">map :: system / Map @81689</div>
<div class="t" style="left:1960.84px;top:557.44px;font-size:24.00px;line-height:24.00px;color:#dcdee1;font-family:'Liberation Sans',sans-serif;">5</div>
<div class="t" style="left:2097.67px;top:557.44px;font-size:24.00px;line-height:24.00px;color:#dcdee1;font-family:'Liberation Sans',sans-serif;">40</div>
<div class="t" style="left:2151.46px;top:557.44px;font-size:24.00px;line-height:24.00px;color:#9aa0a6;font-family:'Liberation Sans',sans-serif;">0 %</div>
<div class="t" style="left:2318.09px;top:557.44px;font-size:24.00px;line-height:24.00px;color:#dcdee1;font-family:'Liberation Sans',sans-serif;">68</div>
<div class="t" style="left:2371.66px;top:557.44px;font-size:24.00px;line-height:24.00px;color:#9aa0a6;font-family:'Liberation Sans',sans-serif;">0 %</div>
<svg style="position:absolute;left:797.6px;top:601.9200000000001px" width="11" height="15" viewBox="0 0 11 15"><path d="M0.3 0 L11 7.5 L0.3 15 Z" fill="#9aa0a6"/></svg>
<div class="t" style="left:814.20px;top:598.20px;font-size:23.40px;line-height:23.40px;color:#5db0d7;font-family:'Liberation Mono',monospace;letter-spacing:-0.912px;">j</div>
<div class="t" style="left:827.33px;top:598.20px;font-size:23.40px;line-height:23.40px;color:#bdc1c6;font-family:'Liberation Mono',monospace;letter-spacing:-0.912px;"> :: </div>
<div class="t" style="left:879.85px;top:598.20px;font-size:23.40px;line-height:23.40px;color:#9980ff;font-family:'Liberation Mono',monospace;letter-spacing:-0.912px;">smi number</div>
<div class="t" style="left:1011.15px;top:598.20px;font-size:23.40px;line-height:23.40px;color:#9aa0a6;font-family:'Liberation Mono',monospace;letter-spacing:-0.912px;"> @81773</div>
<div style="left:1114.69px;top:600.6200000000001px;width:11.5px;height:19.5px;background:transparent;box-sizing:border-box;border:1.6px solid #9aa0a6"></div>
<div class="t" style="left:1960.96px;top:597.50px;font-size:24.00px;line-height:24.00px;color:#dcdee1;font-family:'Liberation Sans',sans-serif;">2</div>
<div class="t" style="left:2111.02px;top:597.50px;font-size:24.00px;line-height:24.00px;color:#dcdee1;font-family:'Liberation Sans',sans-serif;">0</div>
<div class="t" style="left:2151.46px;top:597.50px;font-size:24.00px;line-height:24.00px;color:#9aa0a6;font-family:'Liberation Sans',sans-serif;">0 %</div>
<div class="t" style="left:2331.32px;top:597.50px;font-size:24.00px;line-height:24.00px;color:#dcdee1;font-family:'Liberation Sans',sans-serif;">0</div>
<div class="t" style="left:2371.66px;top:597.50px;font-size:24.00px;line-height:24.00px;color:#9aa0a6;font-family:'Liberation Sans',sans-serif;">0 %</div>
<svg style="position:absolute;left:768.0px;top:641.98px" width="11" height="15" viewBox="0 0 11 15"><path d="M0.3 0 L11 7.5 L0.3 15 Z" fill="#9aa0a6"/></svg>
<div class="t" style="left:784.40px;top:638.26px;font-size:23.40px;line-height:23.40px;color:#5db0d7;font-family:'Liberation Mono',monospace;letter-spacing:-0.912px;">i</div>
<div class="t" style="left:797.53px;top:638.26px;font-size:23.40px;line-height:23.40px;color:#bdc1c6;font-family:'Liberation Mono',monospace;letter-spacing:-0.912px;"> :: </div>
<div class="t" style="left:850.05px;top:638.26px;font-size:23.40px;line-height:23.40px;color:#9980ff;font-family:'Liberation Mono',monospace;letter-spacing:-0.912px;">smi number</div>
<div class="t" style="left:981.35px;top:638.26px;font-size:23.40px;line-height:23.40px;color:#9aa0a6;font-family:'Liberation Mono',monospace;letter-spacing:-0.912px;"> @81767</div>
<div style="left:1084.8899999999999px;top:640.6800000000001px;width:11.5px;height:19.5px;background:transparent;box-sizing:border-box;border:1.6px solid #9aa0a6"></div>
<div class="t" style="left:1960.84px;top:637.56px;font-size:24.00px;line-height:24.00px;color:#dcdee1;font-family:'Liberation Sans',sans-serif;">3</div>
<div class="t" style="left:2111.02px;top:637.56px;font-size:24.00px;line-height:24.00px;color:#dcdee1;font-family:'Liberation Sans',sans-serif;">0</div>
<div class="t" style="left:2151.46px;top:637.56px;font-size:24.00px;line-height:24.00px;color:#9aa0a6;font-family:'Liberation Sans',sans-serif;">0 %</div>
<div class="t" style="left:2331.32px;top:637.56px;font-size:24.00px;line-height:24.00px;color:#dcdee1;font-family:'Liberation Sans',sans-serif;">0</div>
<div class="t" style="left:2371.66px;top:637.56px;font-size:24.00px;line-height:24.00px;color:#9aa0a6;font-family:'Liberation Sans',sans-serif;">0 %</div>
<svg style="position:absolute;left:738.0px;top:682.04px" width="11" height="15" viewBox="0 0 11 15"><path d="M0.3 0 L11 7.5 L0.3 15 Z" fill="#9aa0a6"/></svg>
<div class="t" style="left:753.60px;top:678.32px;font-size:23.40px;line-height:23.40px;color:#dcdee1;font-family:'Liberation Mono',monospace;letter-spacing:-0.912px;">X</div>
<div class="t" style="left:766.73px;top:678.32px;font-size:23.40px;line-height:23.40px;color:#9aa0a6;font-family:'Liberation Mono',monospace;letter-spacing:-0.912px;"> @81777</div>
<div style="left:870.27px;top:680.74px;width:11.5px;height:19.5px;background:transparent;box-sizing:border-box;border:1.6px solid #9aa0a6"></div>
<div class="t" style="left:1664.38px;top:678.32px;font-size:23.40px;line-height:23.40px;color:#8ab4f8;font-family:'Liberation Mono',monospace;letter-spacing:-0.912px;text-decoration:underline;text-decoration-thickness:2px;text-underline-offset:2px">test.html:11</div>
<div class="t" style="left:1960.84px;top:677.62px;font-size:24.00px;line-height:24.00px;color:#dcdee1;font-family:'Liberation Sans',sans-serif;">3</div>
<div class="t" style="left:2097.91px;top:677.62px;font-size:24.00px;line-height:24.00px;color:#dcdee1;font-family:'Liberation Sans',sans-serif;">52</div>
<div class="t" style="left:2151.46px;top:677.62px;font-size:24.00px;line-height:24.00px;color:#9aa0a6;font-family:'Liberation Sans',sans-serif;">0 %</div>
<div class="t" style="left:2304.62px;top:677.62px;font-size:24.00px;line-height:24.00px;color:#dcdee1;font-family:'Liberation Sans',sans-serif;">100</div>
<div class="t" style="left:2371.66px;top:677.62px;font-size:24.00px;line-height:24.00px;color:#9aa0a6;font-family:'Liberation Sans',sans-serif;">0 %</div>
<div style="left:704px;top:709.6px;width:1742px;height:40px;background:#0f639c;"></div>
<svg style="position:absolute;left:738.0px;top:722.1px" width="11" height="15" viewBox="0 0 11 15"><path d="M0.3 0 L11 7.5 L0.3 15 Z" fill="#ffffff"/></svg>
<div class="t" style="left:753.60px;top:718.38px;font-size:23.40px;line-height:23.40px;color:#ffffff;font-family:'Liberation Mono',monospace;letter-spacing:-0.912px;">X</div>
<div class="t" style="left:766.73px;top:718.38px;font-size:23.40px;line-height:23.40px;color:#ffffff;font-family:'Liberation Mono',monospace;letter-spacing:-0.912px;"> @81785</div>
<div style="left:870.27px;top:720.8000000000001px;width:11.5px;height:19.5px;background:transparent;box-sizing:border-box;border:1.6px solid #ffffff"></div>
<div class="t" style="left:1664.38px;top:718.38px;font-size:23.40px;line-height:23.40px;color:#ffffff;font-family:'Liberation Mono',monospace;letter-spacing:-0.912px;text-decoration:underline;text-decoration-thickness:2px;text-underline-offset:2px">test.html:11</div>
<div class="t" style="left:1960.84px;top:717.68px;font-size:24.00px;line-height:24.00px;color:#ffffff;font-family:'Liberation Sans',sans-serif;">3</div>
<div class="t" style="left:2097.91px;top:717.68px;font-size:24.00px;line-height:24.00px;color:#ffffff;font-family:'Liberation Sans',sans-serif;">52</div>
<div class="t" style="left:2151.46px;top:717.68px;font-size:24.00px;line-height:24.00px;color:#ffffff;font-family:'Liberation Sans',sans-serif;">0 %</div>
<div class="t" style="left:2304.62px;top:717.68px;font-size:24.00px;line-height:24.00px;color:#ffffff;font-family:'Liberation Sans',sans-serif;">100</div>
<div class="t" style="left:2371.66px;top:717.68px;font-size:24.00px;line-height:24.00px;color:#ffffff;font-family:'Liberation Sans',sans-serif;">0 %</div>
<svg style="position:absolute;left:738.0px;top:762.1600000000001px" width="11" height="15" viewBox="0 0 11 15"><path d="M0.3 0 L11 7.5 L0.3 15 Z" fill="#9aa0a6"/></svg>
<div class="t" style="left:753.60px;top:758.44px;font-size:23.40px;line-height:23.40px;color:#dcdee1;font-family:'Liberation Mono',monospace;letter-spacing:-0.912px;">X</div>
<div class="t" style="left:766.73px;top:758.44px;font-size:23.40px;line-height:23.40px;color:#9aa0a6;font-family:'Liberation Mono',monospace;letter-spacing:-0.912px;"> @81793</div>
<div style="left:870.27px;top:760.8600000000001px;width:11.5px;height:19.5px;background:transparent;box-sizing:border-box;border:1.6px solid #9aa0a6"></div>
<div class="t" style="left:1664.38px;top:758.44px;font-size:23.40px;line-height:23.40px;color:#8ab4f8;font-family:'Liberation Mono',monospace;letter-spacing:-0.912px;text-decoration:underline;text-decoration-thickness:2px;text-underline-offset:2px">test.html:11</div>
<div class="t" style="left:1960.84px;top:757.74px;font-size:24.00px;line-height:24.00px;color:#dcdee1;font-family:'Liberation Sans',sans-serif;">3</div>
<div class="t" style="left:2097.91px;top:757.74px;font-size:24.00px;line-height:24.00px;color:#dcdee1;font-family:'Liberation Sans',sans-serif;">52</div>
<div class="t" style="left:2151.46px;top:757.74px;font-size:24.00px;line-height:24.00px;color:#9aa0a6;font-family:'Liberation Sans',sans-serif;">0 %</div>
<div class="t" style="left:2304.62px;top:757.74px;font-size:24.00px;line-height:24.00px;color:#dcdee1;font-family:'Liberation Sans',sans-serif;">100</div>
<div class="t" style="left:2371.66px;top:757.74px;font-size:24.00px;line-height:24.00px;color:#9aa0a6;font-family:'Liberation Sans',sans-serif;">0 %</div>
<svg style="position:absolute;left:713.9px;top:804.22px" width="15" height="11" viewBox="0 0 15 11"><path d="M0 0.3 H14.6 L7.3 11 Z" fill="#9aa0a6"/></svg>
<div class="t" style="left:732.00px;top:798.50px;font-size:23.40px;line-height:23.40px;color:#dcdee1;font-family:'Liberation Mono',monospace;letter-spacing:-0.912px;">Y</div>
<div class="t" style="left:766.43px;top:798.99px;font-size:22.00px;line-height:22.00px;color:#9aa0a6;font-family:'Liberation Sans',sans-serif;transform:scaleX(1.0313);">×4</div>
<div class="t" style="left:1960.48px;top:797.80px;font-size:24.00px;line-height:24.00px;color:#dcdee1;font-family:'Liberation Sans',sans-serif;">4</div>
<div class="t" style="left:2084.56px;top:797.80px;font-size:24.00px;line-height:24.00px;color:#dcdee1;font-family:'Liberation Sans',sans-serif;">192</div>
<div class="t" style="left:2151.46px;top:797.80px;font-size:24.00px;line-height:24.00px;color:#9aa0a6;font-family:'Liberation Sans',sans-serif;">0 %</div>
<div class="t" style="left:2304.86px;top:797.80px;font-size:24.00px;line-height:24.00px;color:#dcdee1;font-family:'Liberation Sans',sans-serif;">192</div>
<div class="t" style="left:2371.66px;top:797.80px;font-size:24.00px;line-height:24.00px;color:#9aa0a6;font-family:'Liberation Sans',sans-serif;">0 %</div>
<svg style="position:absolute;left:735.7px;top:844.28px" width="15" height="11" viewBox="0 0 15 11"><path d="M0 0.3 H14.6 L7.3 11 Z" fill="#9aa0a6"/></svg>
<div class="t" style="left:753.60px;top:838.56px;font-size:23.40px;line-height:23.40px;color:#dcdee1;font-family:'Liberation Mono',monospace;letter-spacing:-0.912px;">Y</div>
<div class="t" style="left:766.73px;top:838.56px;font-size:23.40px;line-height:23.40px;color:#9aa0a6;font-family:'Liberation Mono',monospace;letter-spacing:-0.912px;"> @81771</div>
<div style="left:870.27px;top:840.98px;width:11.5px;height:19.5px;background:transparent;box-sizing:border-box;border:1.6px solid #9aa0a6"></div>
<div class="t" style="left:1678.21px;top:838.56px;font-size:23.40px;line-height:23.40px;color:#8ab4f8;font-family:'Liberation Mono',monospace;letter-spacing:-0.912px;text-decoration:underline;text-decoration-thickness:2px;text-underline-offset:2px">test.html:7</div>
<div class="t" style="left:1960.48px;top:837.86px;font-size:24.00px;line-height:24.00px;color:#dcdee1;font-family:'Liberation Sans',sans-serif;">4</div>
<div class="t" style="left:2097.79px;top:837.86px;font-size:24.00px;line-height:24.00px;color:#dcdee1;font-family:'Liberation Sans',sans-serif;">48</div>
<div class="t" style="left:2151.46px;top:837.86px;font-size:24.00px;line-height:24.00px;color:#9aa0a6;font-family:'Liberation Sans',sans-serif;">0 %</div>
<div class="t" style="left:2318.09px;top:837.86px;font-size:24.00px;line-height:24.00px;color:#dcdee1;font-family:'Liberation Sans',sans-serif;">48</div>
<div class="t" style="left:2371.66px;top:837.86px;font-size:24.00px;line-height:24.00px;color:#9aa0a6;font-family:'Liberation Sans',sans-serif;">0 %</div>
<svg style="position:absolute;left:768.0px;top:882.34px" width="11" height="15" viewBox="0 0 11 15"><path d="M0.3 0 L11 7.5 L0.3 15 Z" fill="#9aa0a6"/></svg>
<div class="t" style="left:784.40px;top:878.62px;font-size:23.40px;line-height:23.40px;color:#5db0d7;font-family:'Liberation Mono',monospace;letter-spacing:-0.912px;">__proto__</div>
<div class="t" style="left:902.57px;top:878.62px;font-size:23.40px;line-height:23.40px;color:#bdc1c6;font-family:'Liberation Mono',monospace;letter-spacing:-0.912px;"> :: </div>
<div class="t" style="left:955.09px;top:878.62px;font-size:23.40px;line-height:23.40px;color:#dcdee1;font-family:'Liberation Mono',monospace;letter-spacing:-0.912px;">Object</div>
<div class="t" style="left:1033.87px;top:878.62px;font-size:23.40px;line-height:23.40px;color:#9aa0a6;font-family:'Liberation Mono',monospace;letter-spacing:-0.912px;"> @80167</div>
<div style="left:1137.41px;top:881.0400000000001px;width:11.5px;height:19.5px;background:transparent;box-sizing:border-box;border:1.6px solid #9aa0a6"></div>
<div class="t" style="left:1960.84px;top:877.92px;font-size:24.00px;line-height:24.00px;color:#dcdee1;font-family:'Liberation Sans',sans-serif;">3</div>
<div class="t" style="left:2097.79px;top:877.92px;font-size:24.00px;line-height:24.00px;color:#dcdee1;font-family:'Liberation Sans',sans-serif;">28</div>
<div class="t" style="left:2151.46px;top:877.92px;font-size:24.00px;line-height:24.00px;color:#9aa0a6;font-family:'Liberation Sans',sans-serif;">0 %</div>
<div class="t" style="left:2304.38px;top:877.92px;font-size:24.00px;line-height:24.00px;color:#dcdee1;font-family:'Liberation Sans',sans-serif;">124</div>
<div class="t" style="left:2371.66px;top:877.92px;font-size:24.00px;line-height:24.00px;color:#9aa0a6;font-family:'Liberation Sans',sans-serif;">0 %</div>
<svg style="position:absolute;left:768.0px;top:922.4000000000001px" width="11" height="15" viewBox="0 0 11 15"><path d="M0.3 0 L11 7.5 L0.3 15 Z" fill="#9aa0a6"/></svg>
<div class="t" style="left:784.40px;top:918.68px;font-size:23.40px;line-height:23.40px;color:#9aa0a6;font-family:'Liberation Mono',monospace;letter-spacing:-0.912px;">map :: system / Map @81689</div>
<div class="t" style="left:1960.84px;top:917.98px;font-size:24.00px;line-height:24.00px;color:#dcdee1;font-family:'Liberation Sans',sans-serif;">5</div>
<div class="t" style="left:2097.67px;top:917.98px;font-size:24.00px;line-height:24.00px;color:#dcdee1;font-family:'Liberation Sans',sans-serif;">40</div>
<div class="t" style="left:2151.46px;top:917.98px;font-size:24.00px;line-height:24.00px;color:#9aa0a6;font-family:'Liberation Sans',sans-serif;">0 %</div>
<div class="t" style="left:2318.09px;top:917.98px;font-size:24.00px;line-height:24.00px;color:#dcdee1;font-family:'Liberation Sans',sans-serif;">68</div>
<div class="t" style="left:2371.66px;top:917.98px;font-size:24.00px;line-height:24.00px;color:#9aa0a6;font-family:'Liberation Sans',sans-serif;">0 %</div>
<svg style="position:absolute;left:768.0px;top:962.46px" width="11" height="15" viewBox="0 0 11 15"><path d="M0.3 0 L11 7.5 L0.3 15 Z" fill="#9aa0a6"/></svg>
<div class="t" style="left:784.40px;top:958.74px;font-size:23.40px;line-height:23.40px;color:#5db0d7;font-family:'Liberation Mono',monospace;letter-spacing:-0.912px;">j</div>
<div class="t" style="left:797.53px;top:958.74px;font-size:23.40px;line-height:23.40px;color:#bdc1c6;font-family:'Liberation Mono',monospace;letter-spacing:-0.912px;"> :: </div>
<div class="t" style="left:850.05px;top:958.74px;font-size:23.40px;line-height:23.40px;color:#9980ff;font-family:'Liberation Mono',monospace;letter-spacing:-0.912px;">smi number</div>
<div class="t" style="left:981.35px;top:958.74px;font-size:23.40px;line-height:23.40px;color:#9aa0a6;font-family:'Liberation Mono',monospace;letter-spacing:-0.912px;"> @81773</div>
<div style="left:1084.8899999999999px;top:961.1600000000001px;width:11.5px;height:19.5px;background:transparent;box-sizing:border-box;border:1.6px solid #9aa0a6"></div>
<div class="t" style="left:1960.96px;top:958.04px;font-size:24.00px;line-height:24.00px;color:#dcdee1;font-family:'Liberation Sans',sans-serif;">2</div>
<div class="t" style="left:2111.02px;top:958.04px;font-size:24.00px;line-height:24.00px;color:#dcdee1;font-family:'Liberation Sans',sans-serif;">0</div>
<div class="t" style="left:2151.46px;top:958.04px;font-size:24.00px;line-height:24.00px;color:#9aa0a6;font-family:'Liberation Sans',sans-serif;">0 %</div>
<div class="t" style="left:2331.32px;top:958.04px;font-size:24.00px;line-height:24.00px;color:#dcdee1;font-family:'Liberation Sans',sans-serif;">0</div>
<div class="t" style="left:2371.66px;top:958.04px;font-size:24.00px;line-height:24.00px;color:#9aa0a6;font-family:'Liberation Sans',sans-serif;">0 %</div>
<div style="left:702px;top:994px;width:1744px;height:4px;background:#4a4c50;"></div>
<div style="left:702px;top:998px;width:1744px;height:40px;background:#292a2d;"></div>
<div class="t" style="left:709.13px;top:1004.70px;font-size:23.80px;line-height:23.80px;color:#dcdee1;font-family:'Liberation Sans',sans-serif;transform:scaleX(0.8852);">보관자</div>
<div style="left:2417px;top:1012px;width:19.5px;height:2.4px;background:#9aa0a6;"></div>
<div style="left:2417px;top:1018px;width:19.5px;height:2.4px;background:#9aa0a6;"></div>
<div style="left:2417px;top:1024px;width:19.5px;height:2.4px;background:#9aa0a6;"></div>
<div style="left:702px;top:1038px;width:1744px;height:3px;background:#4a4c50;"></div>
<div style="left:702px;top:1041px;width:1744px;height:41px;background:#292a2d;"></div>
<div style="left:702px;top:1082px;width:1744px;height:2.5px;background:#4a4c50;"></div>
<div style="left:1842px;top:1041px;width:2px;height:495px;background:#4a4c50;"></div>
<div style="left:1982px;top:1041px;width:2px;height:495px;background:#4a4c50;"></div>
<div style="left:2202px;top:1041px;width:2px;height:495px;background:#4a4c50;"></div>
<div class="t" style="left:711.46px;top:1049.05px;font-size:23.31px;line-height:23.31px;color:#dcdee1;font-family:'Liberation Sans',sans-serif;transform:scaleX(0.9441);">객체</div>
<div class="t" style="left:1850.99px;top:1048.38px;font-size:25.03px;line-height:25.03px;color:#dcdee1;font-family:'Liberation Sans',sans-serif;transform:scaleX(0.8642);">거리</div>
<div class="t" style="left:1990.15px;top:1048.38px;font-size:25.03px;line-height:25.03px;color:#dcdee1;font-family:'Liberation Sans',sans-serif;transform:scaleX(0.8707);">얕은 크기</div>
<div class="t" style="left:2210.19px;top:1048.38px;font-size:25.03px;line-height:25.03px;color:#dcdee1;font-family:'Liberation Sans',sans-serif;transform:scaleX(0.8626);">유지된 크기</div>
<svg style="position:absolute;left:714.1px;top:1100.3px" width="15" height="11" viewBox="0 0 15 11"><path d="M0 0.3 H14.6 L7.3 11 Z" fill="#9aa0a6"/></svg>
<div class="t" style="left:730.92px;top:1093.78px;font-size:23.40px;line-height:23.40px;color:#5db0d7;font-family:'Liberation Mono',monospace;letter-spacing:-0.912px;">[3]</div>
<div class="t" style="left:782.35px;top:1090.59px;font-size:21.79px;line-height:21.79px;color:#9aa0a6;font-family:'Liberation Sans',sans-serif;transform:scaleX(0.9590);">위치</div>
<div class="t" style="left:834.20px;top:1093.78px;font-size:23.40px;line-height:23.40px;color:#dcdee1;font-family:'Liberation Mono',monospace;letter-spacing:-0.912px;">Array</div>
<div class="t" style="left:910.93px;top:1093.78px;font-size:23.40px;line-height:23.40px;color:#9aa0a6;font-family:'Liberation Mono',monospace;letter-spacing:-0.912px;">@71621</div>
<div style="left:1004.6px;top:1097.0px;width:11.5px;height:19.5px;background:transparent;box-sizing:border-box;border:1.6px solid #9aa0a6"></div>
<div class="t" style="left:1960.96px;top:1092.88px;font-size:24.00px;line-height:24.00px;color:#dcdee1;font-family:'Liberation Sans',sans-serif;">2</div>
<div class="t" style="left:2097.79px;top:1092.88px;font-size:24.00px;line-height:24.00px;color:#dcdee1;font-family:'Liberation Sans',sans-serif;">16</div>
<div class="t" style="left:2151.46px;top:1092.88px;font-size:24.00px;line-height:24.00px;color:#9aa0a6;font-family:'Liberation Sans',sans-serif;">0 %</div>
<div class="t" style="left:2304.74px;top:1092.88px;font-size:24.00px;line-height:24.00px;color:#dcdee1;font-family:'Liberation Sans',sans-serif;">788</div>
<div class="t" style="left:2371.66px;top:1092.88px;font-size:24.00px;line-height:24.00px;color:#9aa0a6;font-family:'Liberation Sans',sans-serif;">0 %</div>
<svg style="position:absolute;left:737.7px;top:1138.3px" width="11" height="15" viewBox="0 0 11 15"><path d="M0.3 0 L11 7.5 L0.3 15 Z" fill="#9aa0a6"/></svg>
<div class="t" style="left:753.88px;top:1133.78px;font-size:23.40px;line-height:23.40px;color:#5db0d7;font-family:'Liberation Mono',monospace;letter-spacing:-0.912px;">instances</div>
<div class="t" style="left:884.57px;top:1130.59px;font-size:21.79px;line-height:21.79px;color:#9aa0a6;font-family:'Liberation Sans',sans-serif;transform:scaleX(0.9436);">위치</div>
<div class="t" style="left:934.90px;top:1133.78px;font-size:23.40px;line-height:23.40px;color:#dcdee1;font-family:'Liberation Mono',monospace;letter-spacing:-0.912px;">Window /</div>
<div class="t" style="left:1066.33px;top:1133.78px;font-size:23.40px;line-height:23.40px;color:#9aa0a6;font-family:'Liberation Mono',monospace;letter-spacing:-0.912px;">@69841</div>
<div style="left:1159.3px;top:1137.0px;width:11.5px;height:19.5px;background:transparent;box-sizing:border-box;border:1.6px solid #9aa0a6"></div>
<div class="t" style="left:1960.96px;top:1132.88px;font-size:24.00px;line-height:24.00px;color:#dcdee1;font-family:'Liberation Sans',sans-serif;">1</div>
<div class="t" style="left:2097.79px;top:1132.88px;font-size:24.00px;line-height:24.00px;color:#dcdee1;font-family:'Liberation Sans',sans-serif;">36</div>
<div class="t" style="left:2151.46px;top:1132.88px;font-size:24.00px;line-height:24.00px;color:#9aa0a6;font-family:'Liberation Sans',sans-serif;">0 %</div>
<div class="t" style="left:2271.38px;top:1132.88px;font-size:24.00px;line-height:24.00px;color:#dcdee1;font-family:'Liberation Sans',sans-serif;">96 796</div>
<div class="t" style="left:2371.66px;top:1132.88px;font-size:24.00px;line-height:24.00px;color:#9aa0a6;font-family:'Liberation Sans',sans-serif;">7 %</div>
<svg style="position:absolute;left:737.7px;top:1178.3px" width="11" height="15" viewBox="0 0 11 15"><path d="M0.3 0 L11 7.5 L0.3 15 Z" fill="#9aa0a6"/></svg>
<div class="t" style="left:754.10px;top:1173.78px;font-size:23.40px;line-height:23.40px;color:#9aa0a6;font-family:'Liberation Mono',monospace;letter-spacing:-0.912px;">value</div>
<div class="t" style="left:831.59px;top:1170.59px;font-size:21.79px;line-height:21.79px;color:#9aa0a6;font-family:'Liberation Sans',sans-serif;transform:scaleX(0.9282);">위치</div>
<div class="t" style="left:880.93px;top:1173.78px;font-size:23.40px;line-height:23.40px;color:#9aa0a6;font-family:'Liberation Mono',monospace;letter-spacing:-0.912px;">system / PropertyCell @73301</div>
<div class="t" style="left:1960.84px;top:1172.88px;font-size:24.00px;line-height:24.00px;color:#dcdee1;font-family:'Liberation Sans',sans-serif;">3</div>
<div class="t" style="left:2097.67px;top:1172.88px;font-size:24.00px;line-height:24.00px;color:#dcdee1;font-family:'Liberation Sans',sans-serif;">20</div>
<div class="t" style="left:2151.46px;top:1172.88px;font-size:24.00px;line-height:24.00px;color:#9aa0a6;font-family:'Liberation Sans',sans-serif;">0 %</div>
<div class="t" style="left:2317.97px;top:1172.88px;font-size:24.00px;line-height:24.00px;color:#dcdee1;font-family:'Liberation Sans',sans-serif;">20</div>
<div class="t" style="left:2371.66px;top:1172.88px;font-size:24.00px;line-height:24.00px;color:#9aa0a6;font-family:'Liberation Sans',sans-serif;">0 %</div>
<svg style="position:absolute;left:715.9px;top:1218.3px" width="11" height="15" viewBox="0 0 11 15"><path d="M0.3 0 L11 7.5 L0.3 15 Z" fill="#9aa0a6"/></svg>
<div class="t" style="left:731.30px;top:1213.78px;font-size:23.40px;line-height:23.40px;color:#9aa0a6;font-family:'Liberation Mono',monospace;letter-spacing:-0.912px;">3</div>
<div class="t" style="left:756.50px;top:1210.59px;font-size:21.79px;line-height:21.79px;color:#9aa0a6;font-family:'Liberation Sans',sans-serif;transform:scaleX(0.9205);">위치</div>
<div class="t" style="left:805.34px;top:1213.78px;font-size:23.40px;line-height:23.40px;color:#dcdee1;font-family:'Liberation Mono',monospace;letter-spacing:-0.912px;">(object elements)[]</div>
<div class="t" style="left:1070.73px;top:1213.78px;font-size:23.40px;line-height:23.40px;color:#9aa0a6;font-family:'Liberation Mono',monospace;letter-spacing:-0.912px;">@81629</div>
<div class="t" style="left:1960.84px;top:1212.88px;font-size:24.00px;line-height:24.00px;color:#dcdee1;font-family:'Liberation Sans',sans-serif;">3</div>
<div class="t" style="left:2097.79px;top:1212.88px;font-size:24.00px;line-height:24.00px;color:#dcdee1;font-family:'Liberation Sans',sans-serif;">76</div>
<div class="t" style="left:2151.46px;top:1212.88px;font-size:24.00px;line-height:24.00px;color:#9aa0a6;font-family:'Liberation Sans',sans-serif;">0 %</div>
<div class="t" style="left:2318.09px;top:1212.88px;font-size:24.00px;line-height:24.00px;color:#dcdee1;font-family:'Liberation Sans',sans-serif;">76</div>
<div class="t" style="left:2371.66px;top:1212.88px;font-size:24.00px;line-height:24.00px;color:#9aa0a6;font-family:'Liberation Sans',sans-serif;">0 %</div>
</body></html>
